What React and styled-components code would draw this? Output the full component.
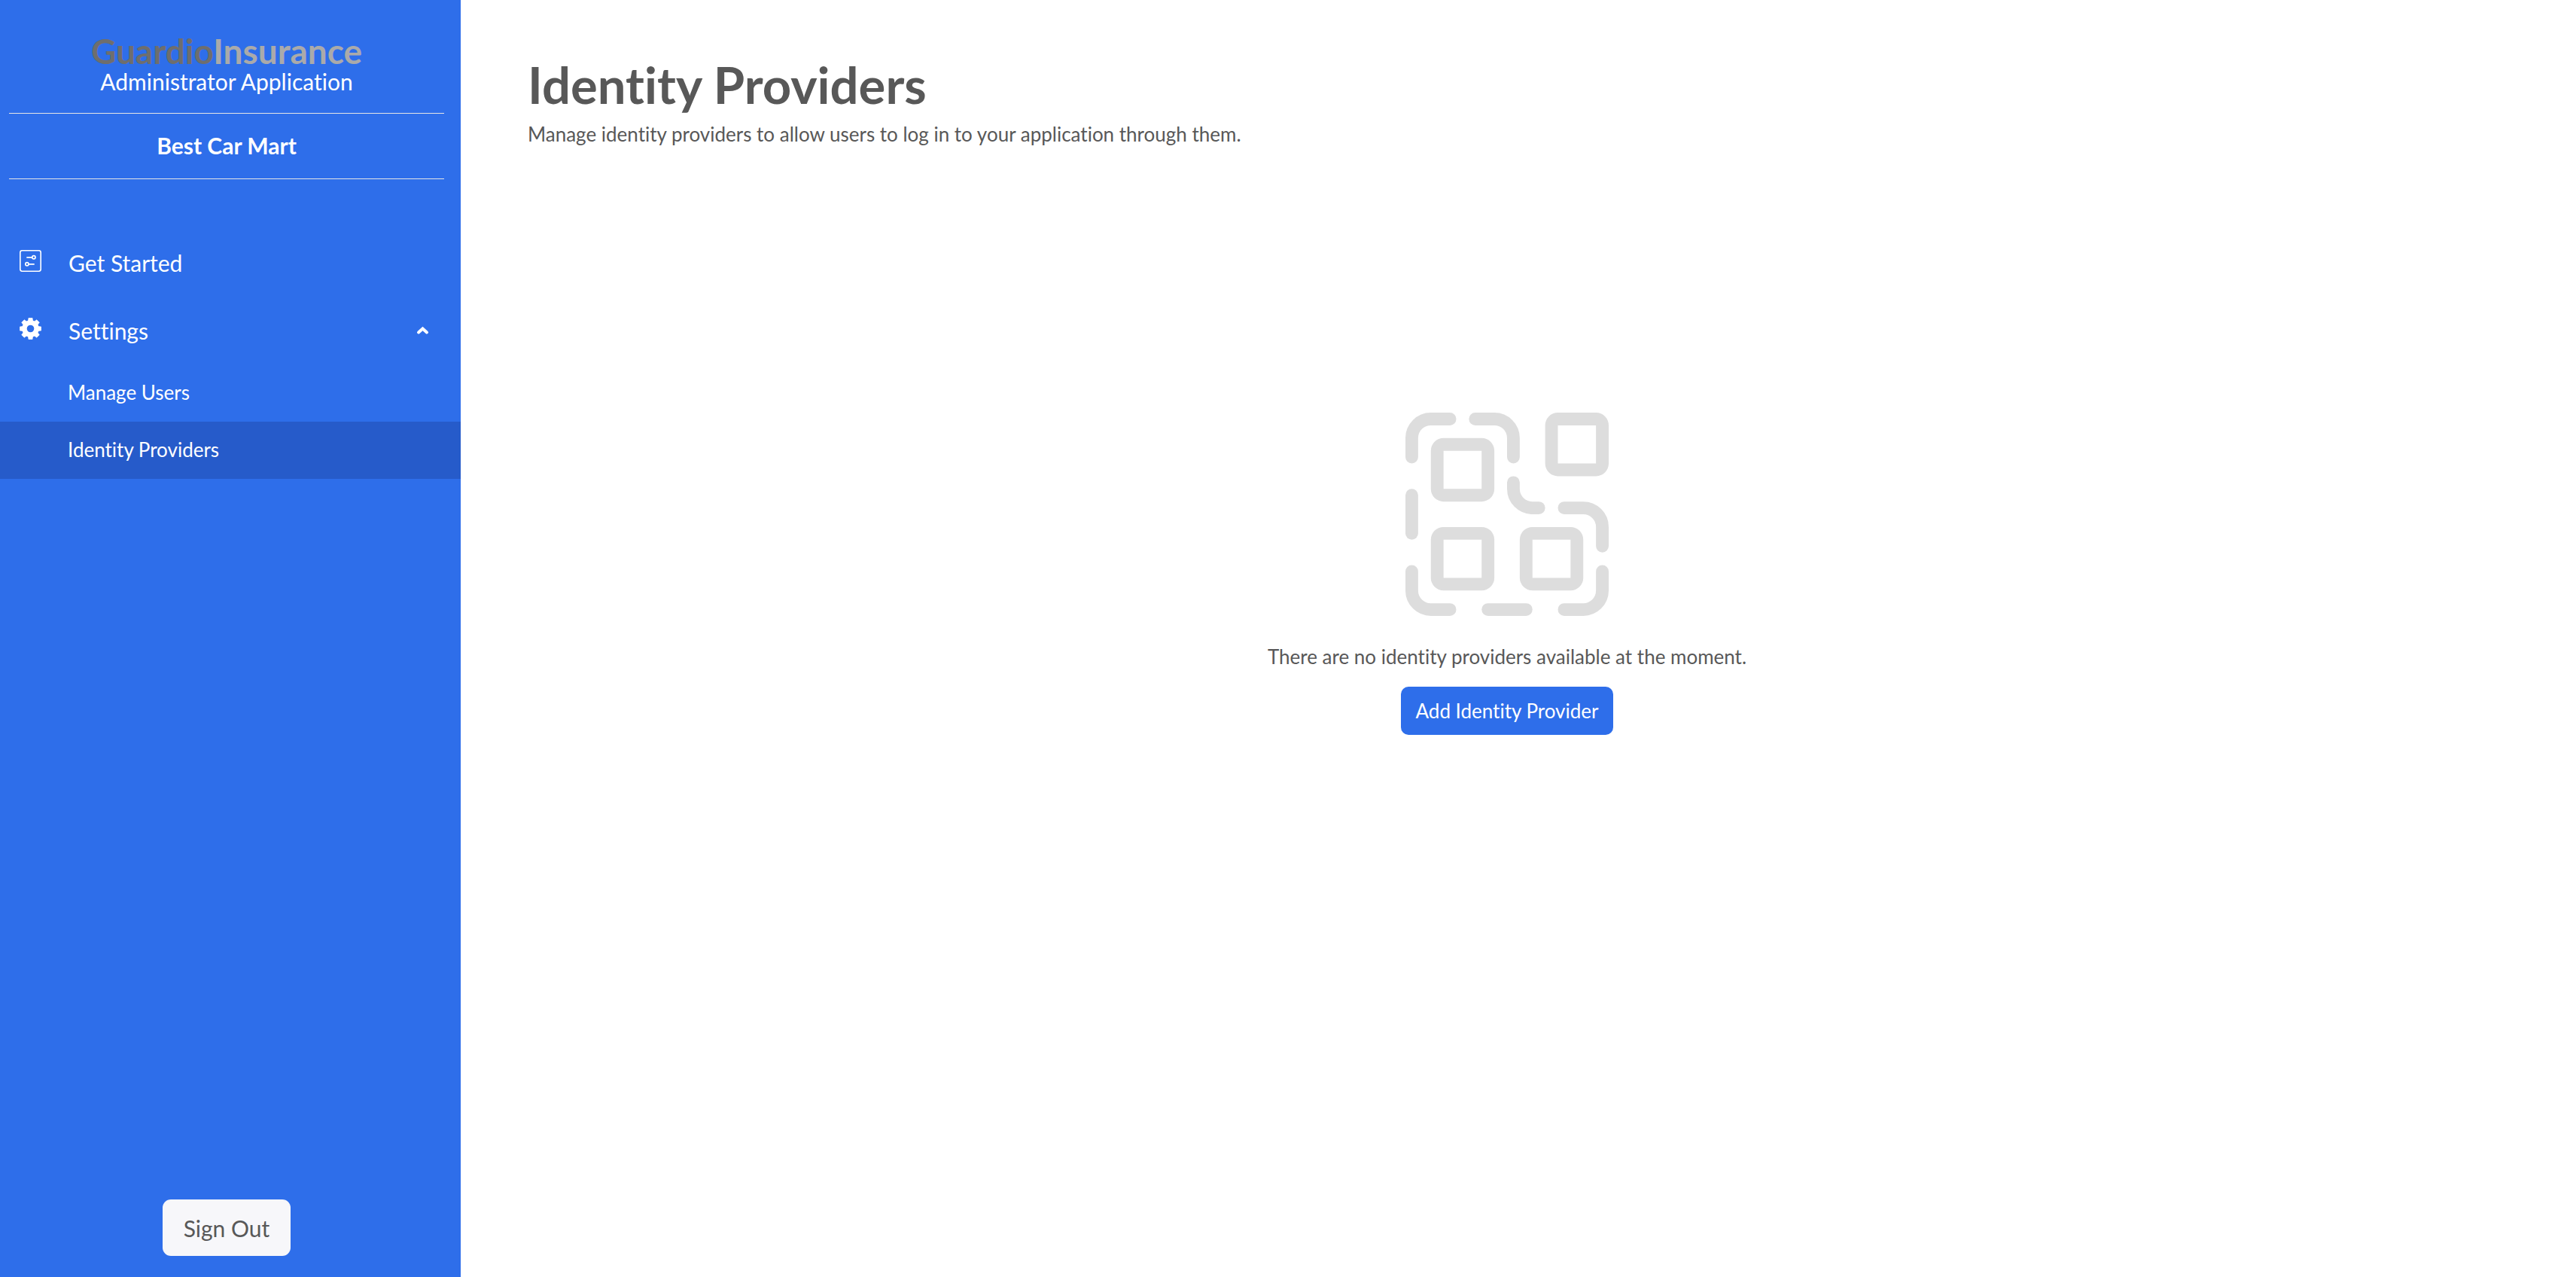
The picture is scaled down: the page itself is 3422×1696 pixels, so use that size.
import React, { useState } from "react";
import styled, { createGlobalStyle } from "styled-components";

const GlobalStyle = createGlobalStyle`
  *, *::before, *::after { box-sizing: border-box; }
  body {
    margin: 0;
    background: #fff;
    color: #585858;
    font-family: Lato, "Open Sans", sans-serif;
    font-size: 26px;
    line-height: 32px;
    font-variant-ligatures: none;
  }
  h1, p, ul { margin: 0; padding: 0; }
  ul { list-style: none; }
  button { border: 0; font: inherit; cursor: pointer; }
`;

const Layout = styled.div`
  display: flex;
  min-height: 100vh;
`;

const Sidebar = styled.aside`
  display: flex;
  flex-direction: column;
  flex: 0 0 612px;
  padding: 44px 0 28px;
  background: #2e6eea;
  color: #fff;
`;

const SidebarSection = styled.div`
  margin: 0 22px 0 12px;
  text-align: center;
  font-size: 30px;
`;

const Brand = styled(SidebarSection)`
  padding-bottom: 26px;
  border-bottom: 1px solid #e6e6e6;
`;

const Logo = styled.div`
  font-size: 46px;
  line-height: 48px;
  font-weight: 700;
  color: #aaa;
`;

const LogoStart = styled.span`
  color: #6e6e6e;
`;

const Tenant = styled(SidebarSection)`
  padding: 26px 0 28px;
  border-bottom: 1px solid #e6e6e6;
  font-weight: 700;
`;

const Nav = styled.nav`
  flex: 1;
  margin-top: 66px;
`;

const itemStyle = `
  display: flex;
  align-items: center;
  width: 100%;
  color: #fff;
  text-align: left;
  text-decoration: none;
`;

const NavLink = styled.a`
  ${itemStyle}
  height: 90px;
  padding: 0 42px 0 26px;
  gap: 36px;
  font-size: 30px;
`;

const NavToggle = styled(NavLink)`
  background: none;
  font-size: 30px;
`;

const NavLabel = styled.span`
  flex: 1;
`;

const NavIcon = styled.svg`
  width: 29px;
  height: 29px;
  margin-bottom: 6px;
`;

const Chevron = styled.svg`
  width: 17px;
  height: 12px;
  transform: ${(p) => (p.$open ? "none" : "rotate(180deg)")};
`;

const SubLink = styled.a`
  ${itemStyle}
  height: 76px;
  padding: 0 26px 2px 90px;
  background: ${(p) => (p.$active ? "#265bca" : "transparent")};
`;

const SignOut = styled.button`
  height: 75px;
  padding: 0 28px;
  border-radius: 11px;
  background: #f7f7fa;
  color: #585858;
`;

const Main = styled.main`
  flex: 1;
  padding: 72px 119px 72px 89px;
`;

const Title = styled.h1`
  font-size: 67px;
  line-height: 80px;
  font-weight: 700;
`;

const Description = styled.p`
  margin-top: 10px;
`;

const EmptyState = styled.section`
  display: flex;
  flex-direction: column;
  align-items: center;
  margin-top: 354px;
`;

const EmptyIcon = styled.svg`
  width: 270px;
  height: 270px;
  margin-bottom: 38px;
`;

const PrimaryButton = styled.button`
  height: 64px;
  margin-top: 24px;
  padding: 0 20px;
  border-radius: 10px;
  background: #2e6eea;
  color: #fff;
`;

const square = (x, y) =>
  `M${x + 1} ${y}h3a1 1 0 0 1 1 1v3a1 1 0 0 1-1 1h-3a1 1 0 0 1-1-1v-3a1 1 0 0 1 1-1zM${x + 1} ${y + 1}v3h3v-3z`;

function ProvidersIllustration() {
  return (
    <EmptyIcon viewBox="0 0 16 16" aria-hidden="true">
      <g fill="none" stroke="#ddd" strokeWidth="1" strokeLinecap="round">
        <path d="M.5 3.5V2A1.5 1.5 0 0 1 2 .5h1.5" />
        <path d="M5.5 .5H7A1.5 1.5 0 0 1 8.5 2v1.5" />
        <path d="M8.5 5.5V6A1.5 1.5 0 0 0 10 7.5h.5" />
        <path d="M12.5 7.5H14A1.5 1.5 0 0 1 15.5 9v1.5" />
        <path d="M.5 6.5v3" />
        <path d="M.5 12.5V14A1.5 1.5 0 0 0 2 15.5h1.5" />
        <path d="M6.5 15.5h3" />
        <path d="M12.5 15.5H14a1.5 1.5 0 0 0 1.5-1.5v-1.5" />
      </g>
      <path
        fill="#ddd"
        fillRule="evenodd"
        d={[square(2, 2), square(11, 0), square(2, 9), square(9, 9)].join("")}
      />
    </EmptyIcon>
  );
}

function SlidersIcon() {
  return (
    <NavIcon viewBox="0 0 29 29" fill="none" stroke="#fff" aria-hidden="true">
      <rect x=".8" y=".8" width="27.4" height="27.4" rx="2.6" strokeWidth="1.6" />
      <g strokeWidth="1.7">
        <path d="M9.3 9.8h7.4M12.3 18.8h7.4" />
        <circle cx="18.9" cy="9.8" r="2.1" />
        <circle cx="9.9" cy="18.8" r="2.1" />
      </g>
    </NavIcon>
  );
}

function GearIcon() {
  return (
    <NavIcon viewBox="0 0 29 29" aria-hidden="true">
      <circle cx="14.5" cy="14.5" r="8" fill="none" stroke="#fff" strokeWidth="6.4" />
      {[0, 45, 90, 135, 180, 225, 270, 315].map((angle) => (
        <path
          key={angle}
          d="M12 .3h5l.8 5h-6.600z"
          fill="#fff"
          stroke="#fff"
          strokeWidth=".6"
          strokeLinejoin="round"
          transform={`rotate(${angle} 14.5 14.5)`}
        />
      ))}
    </NavIcon>
  );
}

export default function App() {
  const [open, setOpen] = useState(true);
  return (
    <>
      <GlobalStyle />
      <Layout>
        <Sidebar>
          <Brand>
            <Logo>
              <LogoStart>Guardio</LogoStart>Insurance
            </Logo>
            <p>Administrator Application</p>
          </Brand>
          <Tenant>Best Car Mart</Tenant>
          <Nav aria-label="Main">
            <NavLink href="#get-started">
              <SlidersIcon />
              <NavLabel>Get Started</NavLabel>
            </NavLink>
            <NavToggle as="button" type="button" aria-expanded={open} onClick={() => setOpen(!open)}>
              <GearIcon />
              <NavLabel>Settings</NavLabel>
              <Chevron $open={open} viewBox="0 0 17 12" aria-hidden="true">
                <path d="M3 8.500l5.500-5L14 8.500" fill="none" stroke="#fff" strokeWidth="4" strokeLinecap="round" />
              </Chevron>
            </NavToggle>
            {open && (
              <ul>
                <li>
                  <SubLink href="#users">Manage Users</SubLink>
                </li>
                <li>
                  <SubLink href="#identity-providers" $active aria-current="page">
                    Identity Providers
                  </SubLink>
                </li>
              </ul>
            )}
          </Nav>
          <SidebarSection>
            <SignOut type="button">Sign Out</SignOut>
          </SidebarSection>
        </Sidebar>
        <Main>
          <Title>Identity Providers</Title>
          <Description>
            Manage identity providers to allow users to log in to your application through them.
          </Description>
          <EmptyState>
            <ProvidersIllustration />
            <p>There are no identity providers available at the moment.</p>
            <PrimaryButton type="button">Add Identity Provider</PrimaryButton>
          </EmptyState>
        </Main>
      </Layout>
    </>
  );
}
